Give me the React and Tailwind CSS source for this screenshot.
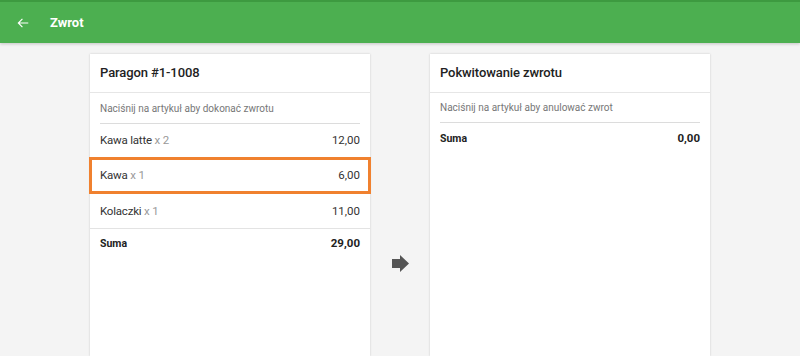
import React from 'react';

const receipt = [
  { name: 'Kawa latte', qty: 2, price: '12,00', h: 'h-[33px]' },
  { name: 'Kawa', qty: 1, price: '6,00', selected: true },
  { name: 'Kolaczki', qty: 1, price: '11,00', h: 'h-[34px]' },
];

const ItemRow = ({ item }) => {
  const content = (
    <>
      <span className="tracking-[-0.2px]">
        {item.name} <span className="text-[#999]">x {item.qty}</span>
      </span>
      <span>{item.price}</span>
    </>
  );
  if (item.selected) {
    return (
      <div className="-mx-px flex h-[37px] items-center justify-between border-[3px] border-[#f0812f] px-[8px] pt-px text-[11.5px] text-[#333]">
        {content}
      </div>
    );
  }
  return (
    <div className={`flex ${item.h} items-center justify-between px-[10px] pt-px text-[11.5px] text-[#333]`}>
      {content}
    </div>
  );
};

const App = () => {
  return (
    <div className="flex h-[356px] w-[800px] flex-col overflow-hidden bg-[#f4f4f4] font-['Roboto',sans-serif]">
      {/* Toolbar */}
      <div className="relative z-10 flex h-[43px] shrink-0 items-center border-t-2 border-[#3d9a40] bg-[#4caf50] shadow-[0_1px_3px_rgba(0,0,0,0.2)]">
        <svg className="ml-[16px] h-[14px] w-[14px]" viewBox="0 0 24 24" fill="none" stroke="white" strokeWidth="2">
          <path d="M21 12H4M11 5l-7 7 7 7" />
        </svg>
        <span className="ml-[20px] text-[13px] font-bold text-white">Zwrot</span>
      </div>

      {/* Body */}
      <div className="flex flex-1 justify-center pt-[11px]">
        {/* Receipt card */}
        <div className="w-[280px] bg-white shadow-[0_0_2px_rgba(0,0,0,0.18)]">
          <div className="flex h-[39px] items-center border-b border-[#e6e6e6] px-[10px] text-[13px] font-medium tracking-[-0.1px] text-[#222]">
            Paragon #1-1008
          </div>
          <div className="mx-[10px] flex h-[31px] items-center border-b border-[#dcdcdc] text-[10px] text-[#777]">
            Naciśnij na artykuł aby dokonać zwrotu
          </div>
          {receipt.map((item) => (
            <ItemRow key={item.name} item={item} />
          ))}
          <div className="flex h-[31px] items-center justify-between border-t border-[#e3e3e3] px-[10px] font-bold text-[#222]">
            <span className="text-[10.5px]">Suma</span>
            <span className="text-[11.5px]">29,00</span>
          </div>
        </div>

        {/* Arrow */}
        <div className="flex w-[60px] items-start justify-center pt-[201px]">
          <svg width="17" height="17" viewBox="0 0 17 17">
            <path d="M0 4h8V0l9 8.5L8 17v-4H0z" fill="#555" />
          </svg>
        </div>

        {/* Return card */}
        <div className="w-[280px] bg-white shadow-[0_0_2px_rgba(0,0,0,0.18)]">
          <div className="flex h-[39px] items-center border-b border-[#e6e6e6] px-[10px] text-[13px] font-medium tracking-[-0.1px] text-[#222]">
            Pokwitowanie zwrotu
          </div>
          <div className="mx-[10px] flex h-[30px] items-center border-b border-[#dcdcdc] text-[10px] text-[#777]">
            Naciśnij na artykuł aby anulować zwrot
          </div>
          <div className="flex h-[31px] items-center justify-between px-[10px] font-bold text-[#222]">
            <span className="text-[10.5px]">Suma</span>
            <span className="text-[11.5px]">0,00</span>
          </div>
        </div>
      </div>
    </div>
  );
};

export default App;
